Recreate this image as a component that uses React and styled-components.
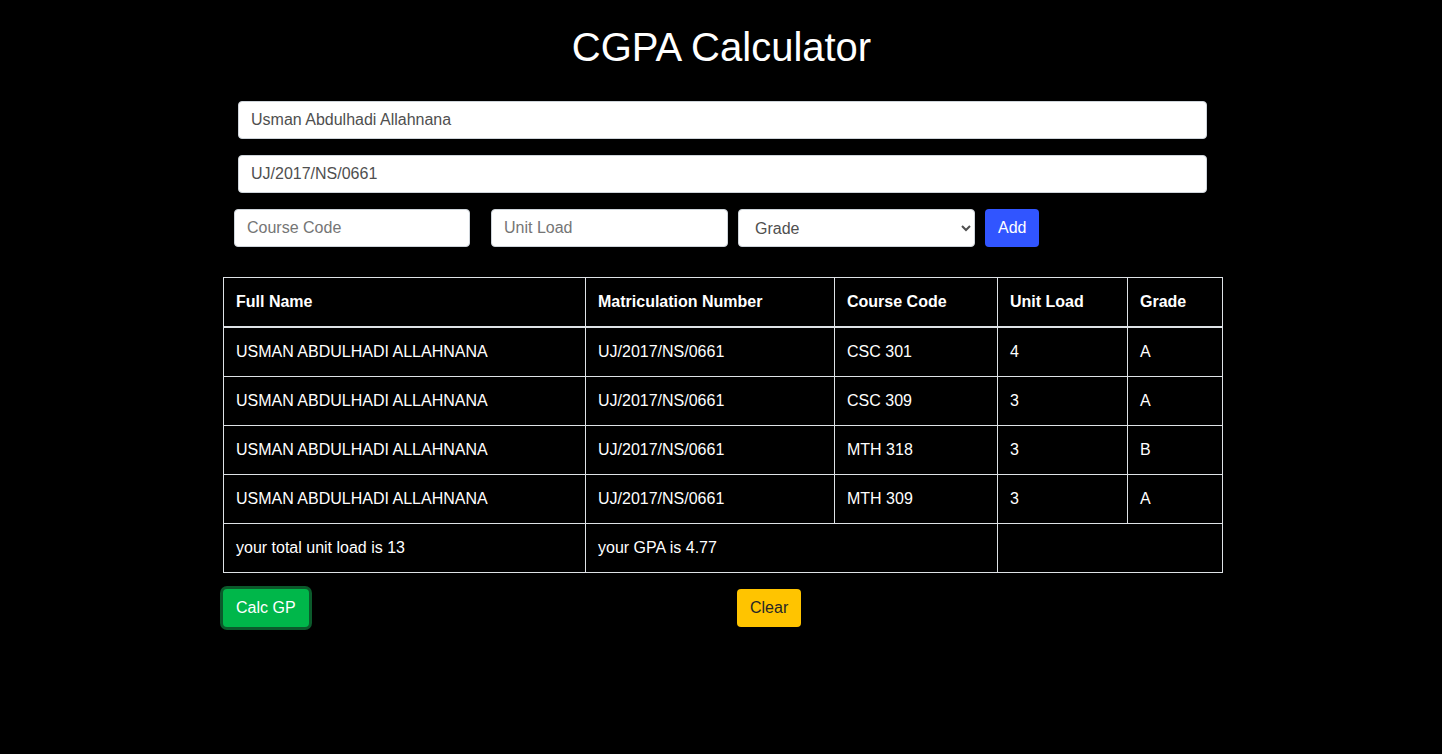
import React from "react";
import styled, { createGlobalStyle } from "styled-components";

const Global = createGlobalStyle`
  html, body { margin: 0; padding: 0; background: #000; }
  body {
    font-family: "Liberation Sans", Arial, sans-serif;
    color: #fff;
    font-size: 16px;
    line-height: 1.5;
    min-height: 754px;
  }
  * { box-sizing: border-box; }
`;

const Page = styled.div`
  width: 1000px;
  margin: 0 auto;
  padding-left: 1px;
`;

const Title = styled.h1`
  margin: 23px 0 30px;
  font-size: 40px;
  font-weight: 400;
  line-height: 48px;
  text-align: center;
  color: #fff;
`;

const Form = styled.div`
  display: flex;
  flex-direction: column;
  gap: 16px;
`;

const WideField = styled.input`
  display: block;
  height: 38px;
  margin: 0 14px 0 16px;
  padding: 0 12px;
  border: 1px solid #ced4da;
  border-radius: 4px;
  background: #fff;
  color: #4f4f4f;
  font: 16px "Liberation Sans", Arial, sans-serif;
  outline: none;
`;

const EntryRow = styled.div`
  display: flex;
  align-items: center;
  padding-left: 12px;
`;

const SmallField = styled.input`
  width: ${(p) => p.$w}px;
  height: 38px;
  margin-right: ${(p) => p.$gap}px;
  padding: 0 12px;
  border: 1px solid #ced4da;
  border-radius: 4px;
  background: #fff;
  color: #4f4f4f;
  font: 16px "Liberation Sans", Arial, sans-serif;
  outline: none;
  &::placeholder { color: #757575; }
`;

const GradeSelect = styled.select`
  width: 237px;
  height: 38px;
  margin-right: 10px;
  padding: 0 8px 0 12px;
  border: 1px solid #ced4da;
  border-radius: 4px;
  background: #fff;
  color: #4f4f4f;
  font: 16px "Liberation Sans", Arial, sans-serif;
  outline: none;
`;

const Button = styled.button`
  height: 38px;
  padding: 0 ${(p) => p.$px || 13}px;
  border: none;
  border-radius: 4px;
  background: ${(p) => p.$bg};
  color: ${(p) => p.$fg || "#fff"};
  font: 16px "Liberation Sans", Arial, sans-serif;
  box-shadow: ${(p) => (p.$ring ? `0 0 0 3px ${p.$ring}` : "none")};
  cursor: pointer;
`;

const Table = styled.table`
  width: 999px;
  margin: 30px 0 0 1px;
  border-collapse: collapse;
  table-layout: fixed;
  color: #fff;
`;

const Th = styled.th`
  text-align: left;
  font-weight: 700;
  padding: 12px;
  border: 1px solid #dee2e6;
  border-bottom: 2px solid #dee2e6;
  line-height: 24px;
`;

const Td = styled.td`
  padding: 12px;
  border: 1px solid #dee2e6;
  line-height: 24px;
  white-space: nowrap;
`;

const Actions = styled.div`
  display: grid;
  grid-template-columns: 1fr 1fr;
  margin-top: 16px;
  padding-left: 1px;
`;

const RightCol = styled.div`
  padding-left: 15px;
`;

const rows = [
  ["CSC 301", "4", "A"],
  ["CSC 309", "3", "A"],
  ["MTH 318", "3", "B"],
  ["MTH 309", "3", "A"],
];

export default function App() {
  return (
    <>
      <Global />
      <Page>
        <Title>CGPA Calculator</Title>
        <Form>
          <WideField defaultValue="Usman Abdulhadi Allahnana" />
          <WideField defaultValue="UJ/2017/NS/0661" />
          <EntryRow>
            <SmallField $w={236} $gap={21} placeholder="Course Code" />
            <SmallField $w={237} $gap={10} placeholder="Unit Load" />
            <GradeSelect defaultValue="">
              <option value="">Grade</option>
              <option>A</option>
              <option>B</option>
              <option>C</option>
              <option>D</option>
              <option>E</option>
              <option>F</option>
            </GradeSelect>
            <Button $bg="#3155ff" $px={13}>Add</Button>
          </EntryRow>
        </Form>
        <Table>
          <colgroup>
            <col style={{ width: 362 }} />
            <col style={{ width: 249 }} />
            <col style={{ width: 163 }} />
            <col style={{ width: 130 }} />
            <col style={{ width: 95 }} />
          </colgroup>
          <thead>
            <tr>
              <Th>Full Name</Th>
              <Th>Matriculation Number</Th>
              <Th>Course Code</Th>
              <Th>Unit Load</Th>
              <Th>Grade</Th>
            </tr>
          </thead>
          <tbody>
            {rows.map((r, i) => (
              <tr key={i}>
                <Td>USMAN ABDULHADI ALLAHNANA</Td>
                <Td>UJ/2017/NS/0661</Td>
                <Td>{r[0]}</Td>
                <Td>{r[1]}</Td>
                <Td>{r[2]}</Td>
              </tr>
            ))}
            <tr>
              <Td>your total unit load is 13</Td>
              <Td colSpan={2}>your GPA is 4.77</Td>
              <Td colSpan={2}></Td>
            </tr>
          </tbody>
        </Table>
        <Actions>
          <div>
            <Button $bg="#00b74a" $ring="#0b5a2b" $px={13}>Calc GP</Button>
          </div>
          <RightCol>
            <Button $bg="#ffc400" $fg="#262626" $px={13}>Clear</Button>
          </RightCol>
        </Actions>
      </Page>
    </>
  );
}
